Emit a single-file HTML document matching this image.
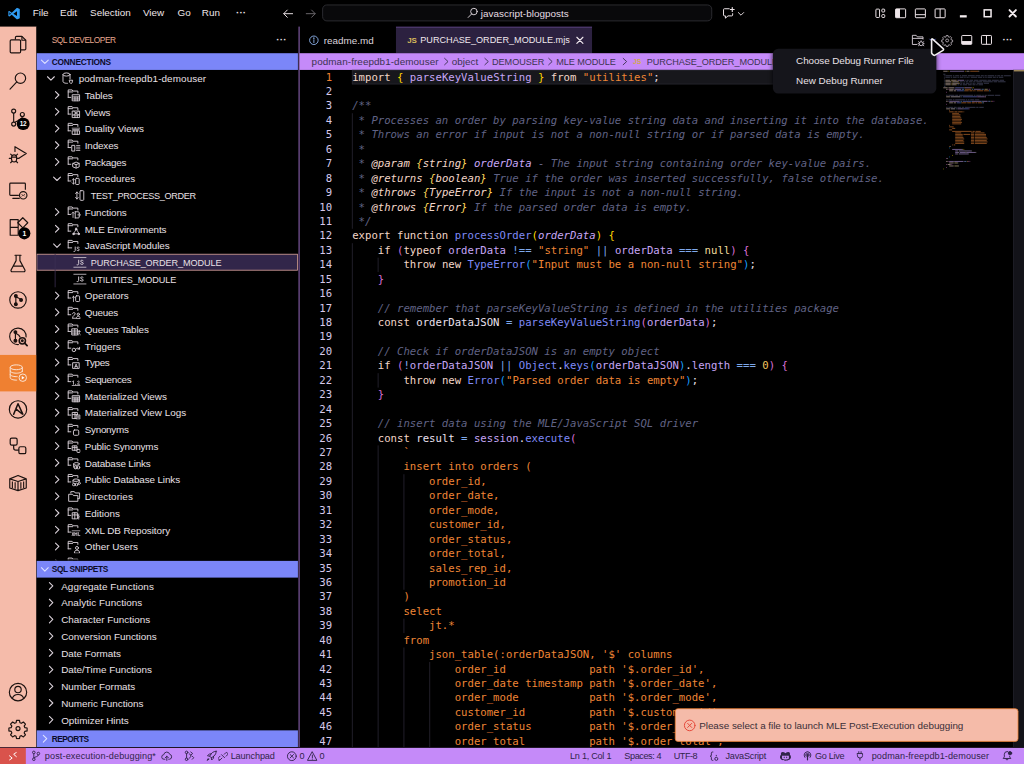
<!DOCTYPE html>
<html lang="en"><head><meta charset="utf-8"><title>PURCHASE_ORDER_MODULE.mjs - javascript-blogposts</title>
<style>
*{box-sizing:border-box;margin:0;padding:0}
html,body{width:1024px;height:764px;overflow:hidden;background:#000}
body{font-family:"Liberation Sans",sans-serif;font-size:13px;color:#e9dfe6}
#app{position:absolute;left:0;top:0;width:1352px;height:1010px;transform:scale(.76);transform-origin:0 0;background:#000;overflow:hidden}
.abs{position:absolute}
svg{display:block}
/* title bar */
#title{position:absolute;left:0;top:0;width:100%;height:35px;background:#000}
#title .menu{position:absolute;top:-.6px;height:35px;line-height:35px;font-size:13px;color:#efe6ea;white-space:nowrap}
#cmd{position:absolute;left:423.5px;top:5.5px;width:513.5px;height:22.5px;border:1px solid #36363c;border-radius:6px;background:#09090b}
#cmd span{position:absolute;left:208px;top:0;line-height:21px;font-size:13px;letter-spacing:.05px;color:#e6dde2;white-space:nowrap}
/* activity bar */
#act{position:absolute;left:0;top:35px;width:48.3px;height:948.27px;background:#f5bbaa}
#act .it{position:absolute;left:0;width:48.3px;height:48px}
#act .it svg{position:absolute;left:10.4px;top:10.2px;width:27.4px;height:27.4px}
#act .on{background:#ef8031}
.badge{position:absolute;left:24px;top:24px;min-width:16px;height:16px;border-radius:8px;background:#000;color:#fff;font-size:9px;font-weight:bold;line-height:16px;text-align:center;padding:0 3px}
/* sidebar */
#side{position:absolute;z-index:2;left:48px;top:35px;width:345.6px;height:948.27px;background:#000;border-right:1.4px solid #c58af9;overflow:hidden}
#side .ttl{position:absolute;left:20px;top:0;line-height:35.4px;font-size:11px;letter-spacing:-.59px;color:#e8a68f}
.ph{position:absolute;left:0;width:344px;height:22px;background:#7b86f8;color:#0c0c2a;font-weight:bold;font-size:11px;line-height:23px;padding-left:20px;white-space:nowrap}
.ph svg{position:absolute;left:3px;top:3px;width:16px;height:16px}
.row{position:absolute;left:0;width:344px;height:22px;line-height:22px;font-size:13px;color:#e9e1e6;white-space:nowrap}
.row .tw{position:absolute;top:3px;width:16px;height:16px}
.row .ic{position:absolute;top:3px;width:16px;height:16px}
.row .lb{position:absolute;top:1.2px}
.row.sel{background:#32264a;outline:1.2px solid #dba392;outline-offset:-1.2px}
/* editor */
#ed{position:absolute;left:392px;top:35px;width:960px;height:948.27px;background:#000;overflow:hidden}
#tabs{position:absolute;left:0;top:0;width:100%;height:35px;background:#000}
.tab{position:absolute;top:0;height:35px;line-height:35px;font-size:13px;white-space:nowrap;color:#e9e1e6}
#bc{position:absolute;left:0;top:35px;width:100%;height:22px;background:#c58af9;color:#3b3350;font-size:13px;line-height:22px;white-space:nowrap}
#bc span{position:absolute;top:.5px}
#code{position:absolute;left:0;top:57px;width:100%;height:891.27px;font-family:"DejaVu Sans Mono","Liberation Mono",monospace;font-size:14px;line-height:19px}
.ln{position:absolute;left:0;width:45px;text-align:right;height:19px;color:#d6c9ea}
.cl{position:absolute;left:71.4px;height:19px;white-space:pre;color:#ece2ea}
.ln.a{color:#ef8031}
.cl i{font-style:normal}
.k{color:#f3d6c8}.f{color:#7f8af7}.v{color:#c6a6f6}.d{color:#ebe0ee}.s{color:#ef8636}.o{color:#7ea9ec}.l{color:#f3dc9c}.n{color:#efc25c}.p{color:#ece2ea}
.b1{color:#ffd700}.b2{color:#da70d6}.b3{color:#179fff}
.cl i.c{color:#606385;font-style:italic}.cl i.t{color:#f3d6c8;font-style:italic}.cl i.tb{color:#ffd75a;font-style:italic}.cl i.tv{color:#c6a6f6;font-style:italic}
.row.u .lb,.u2{font-size:12px}
.u3{font-size:12px;letter-spacing:-.1px}
/* status */
#status{position:absolute;left:0;top:983.9px;width:100%;height:27px;background:#c58af9;color:#30244a;font-size:12px;line-height:22px;white-space:nowrap}
#status span{position:absolute;top:0}
</style></head>
<body>
<div id="app">
<div id="title">
<svg class="abs" style="left:9.5px;top:9.5px;width:17px;height:16px" viewBox="0 0 100 100"><path d="M74 2 31 42 12 27 3 31v38l9 4 19-15 43 40 23-10V12zM12 61V39l12 11zm62 9L44 50l30-20z" fill="#2f9bf2"/></svg>
<span class="menu" style="left:43px">File</span>
<span class="menu" style="left:79px">Edit</span>
<span class="menu" style="left:118.5px">Selection</span>
<span class="menu" style="left:188px">View</span>
<span class="menu" style="left:233.5px">Go</span>
<span class="menu" style="left:265.5px">Run</span>
<span class="menu" style="left:310.500px;letter-spacing:.200px;font-weight:bold">···</span>
<svg class="abs" style="left:371px;top:9.5px;width:16px;height:16px" viewBox="0 0 16 16" fill="none" stroke="#efe6ea" stroke-width="1.25" stroke-linecap="round" stroke-linejoin="round"><path d="M14 8H2.5M7 3.2 2.3 8 7 12.8"/></svg>
<svg class="abs" style="left:401px;top:9.5px;width:16px;height:16px" viewBox="0 0 16 16" fill="none" stroke="#6e6a70" stroke-width="1.25" stroke-linecap="round" stroke-linejoin="round"><path d="M2 8h11.5M9 3.2 13.7 8 9 12.8"/></svg>
<div id="cmd"><svg class="abs" style="left:189px;top:2.5px;width:16px;height:16px" viewBox="0 0 16 16" fill="none" stroke="#e6dde2" stroke-width="1.2" stroke-linecap="round"><circle cx="9.6" cy="6.2" r="4.3"/><path d="M6.5 9.4 2 14"/></svg><span>javascript-blogposts</span></div>
<svg class="abs" style="left:950px;top:9px;width:18px;height:17px" viewBox="0 0 18 17" fill="none" stroke="#efe6ea" stroke-width="1.3" stroke-linejoin="round" stroke-linecap="round"><path d="M9.5 2.5H3.2a1.2 1.2 0 0 0-1.2 1.2v7a1.2 1.2 0 0 0 1.2 1.2H4.5v3l3.4-3h4.9a1.2 1.2 0 0 0 1.2-1.2V9"/><path d="M13.5 1v5M11 3.5h5" stroke-width="1.5"/></svg>
<svg class="abs" style="left:969px;top:12px;width:12px;height:12px" viewBox="0 0 12 12" fill="none" stroke="#efe6ea" stroke-width="1.2" stroke-linecap="round" stroke-linejoin="round"><path d="M2.5 4.5 6 8l3.500-3.500"/></svg>
<!-- layout controls -->
<svg class="abs" style="left:1150px;top:9px;width:17px;height:17px" viewBox="0 0 17 17" fill="none" stroke="#efe6ea" stroke-width="1.3"><rect x="2.500" y="3" width="4.800" height="11" rx="1"/><rect x="10.300" y="3" width="3.800" height="3.800" rx="1"/><rect x="10.300" y="10.200" width="3.800" height="3.800" rx="1"/></svg>
<svg class="abs" style="left:1175.500px;top:9px;width:18px;height:17px" viewBox="0 0 18 17"><rect x="2.400" y="2.700" width="13.200" height="11.600" rx="1" fill="none" stroke="#efe6ea" stroke-width="1.300"/><rect x="2.400" y="2.700" width="5.800" height="11.600" fill="#efe6ea"/></svg>
<svg class="abs" style="left:1201.500px;top:9px;width:18px;height:17px" viewBox="0 0 18 17" fill="none" stroke="#efe6ea" stroke-width="1.3"><rect x="2.400" y="2.700" width="13.200" height="11.600" rx="1"/><path d="M2.400 10.300h13.200"/></svg>
<svg class="abs" style="left:1227.500px;top:9px;width:18px;height:17px" viewBox="0 0 18 17" fill="none" stroke="#efe6ea" stroke-width="1.3"><rect x="2.400" y="2.700" width="13.200" height="11.600" rx="1"/><path d="M9 2.700v11.600"/></svg>
<!-- window controls -->
<div class="abs" style="left:1262.500px;top:19.800px;width:9.800px;height:2.800px;background:#f3ecef"></div>
<div class="abs" style="left:1294.300px;top:11.800px;width:11px;height:11px;border:2.600px solid #f3ecef"></div>
<svg class="abs" style="left:1324.500px;top:10px;width:15px;height:15px" viewBox="0 0 15 15" stroke="#f3ecef" stroke-width="2.500" stroke-linecap="round"><path d="M3.300 3.300l8.400 8.400M11.700 3.300l-8.400 8.400"/></svg>
</div>

<div id="act">
<div class="it" style="top:0"><svg viewBox="0 0 24 24" fill="none" stroke="#1c1210" stroke-width="1.35" stroke-linejoin="round"><path d="M9 6V3.800c0-.700.500-1.300 1.200-1.300h6.300l4.500 4.500v9.700c0 .700-.500 1.300-1.200 1.300H15"/><path d="M16.500 2.500V7H21"/><rect x="3" y="6.500" width="12" height="15" rx="1.300"/></svg></div>
<div class="it" style="top:48px"><svg viewBox="0 0 24 24" fill="none" stroke="#1c1210" stroke-width="1.35" stroke-linecap="round"><circle cx="14.800" cy="8.700" r="6"/><path d="M10.600 13 2.800 21.200"/></svg></div>
<div class="it" style="top:96px"><svg viewBox="0 0 24 24" fill="none" stroke="#1c1210" stroke-width="1.35"><circle cx="7" cy="4.500" r="2.300"/><circle cx="7" cy="19.500" r="2.300"/><circle cx="17" cy="8.500" r="2.300"/><path d="M7 6.800v10.400M17 10.800c0 4-6 4.500-9 7"/></svg><div class="badge" style="left:22px;top:23.700px;font-size:8.500px;width:16.800px;height:16.800px;line-height:16.800px;border-radius:9px;padding:0;letter-spacing:-.300px">12</div></div>
<div class="it" style="top:144px"><svg viewBox="0 0 24 24" fill="none" stroke="#1c1210" stroke-width="1.35" stroke-linejoin="round" stroke-linecap="round"><path d="M8.500 9V3.500L21.500 11.500 13.500 16.500"/><ellipse cx="7.500" cy="17" rx="3" ry="4"/><path d="M5 13.500 3.500 12M10 13.500l1.500-1.500M4.500 17H2M10.500 17H13M5 20.500 3.500 22M10 20.500l1.500 1.500M5 15.500h5"/></svg></div>
<div class="it" style="top:192px"><svg viewBox="0 0 24 24" fill="none" stroke="#1c1210" stroke-width="1.35" stroke-linejoin="round"><path d="M13 17.500H3.500c-.600 0-1-.400-1-1v-12c0-.600.400-1 1-1h16c.600 0 1 .400 1 1V11"/><path d="M6 21h7.500" stroke-linecap="round"/><circle cx="18" cy="17.500" r="4.300"/><path d="M16.300 18.800l1.200-1.300-1.200-1.200M19.700 16.200l-1.200 1.300 1.200 1.200" stroke-width="1"/></svg></div>
<div class="it" style="top:240px"><svg viewBox="0 0 24 24" fill="none" stroke="#1c1210" stroke-width="1.35" stroke-linejoin="round"><path d="M3 3.500h9.200v18H3zM3 12.500h9"/><path d="M17.500 1.300 23.300 7.100 17.500 12.900 11.700 7.100z"/></svg><div class="badge" style="left:24px;top:23.700px;width:16px;height:16px;line-height:16px;border-radius:9px;padding:0;font-size:9px">1</div></div>
<div class="it" style="top:288px"><svg viewBox="0 0 24 24" fill="none" stroke="#1c1210" stroke-width="1.35" stroke-linejoin="round" stroke-linecap="round"><path d="M8.500 2.500h7M9.800 2.500v6.200L4 19.500c-.400.900.200 2 1.200 2h13.600c1 0 1.600-1.100 1.200-2L14.200 8.700V2.500M7 15h10"/></svg></div>
<div class="it" style="top:336px"><svg viewBox="0 0 24 24" fill="none" stroke="#1c1210" stroke-width="1.35"><circle cx="12" cy="12" r="9.500"/><circle cx="9.500" cy="7.500" r="1.600" fill="#1c1210"/><circle cx="9.500" cy="17" r="1.600" fill="#1c1210"/><circle cx="15.500" cy="12" r="1.600" fill="#1c1210"/><path d="M9.500 7.500V17M9.500 8.500c3 1 5.500 2 6 3.500"/></svg></div>
<div class="it" style="top:384px"><svg viewBox="0 0 24 24" fill="none" stroke="#1c1210" stroke-width="1.35"><path d="M13 21.300A9.500 9.500 0 1 1 21.300 13"/><circle cx="9" cy="7" r="1.600" fill="#1c1210"/><circle cx="9" cy="17" r="1.600" fill="#1c1210"/><path d="M9 7v10M9 8c3 1.500 5 3 5.500 5"/><circle cx="17" cy="17" r="3.600" stroke-width="1.800"/><circle cx="17" cy="17" r="1" fill="#1c1210"/><path d="M19.700 19.700 22.500 22.500" stroke-width="2" stroke-linecap="round"/></svg></div>
<div class="it on" style="top:432px"><svg viewBox="0 0 24 24" fill="none" stroke="#fbe6d8" stroke-width="1.1"><ellipse cx="10" cy="5.500" rx="7" ry="2.800"/><path d="M3 5.500v12c0 1.500 3 2.800 7 2.800h1M17 5.500V11M3 9.500c0 1.500 3 2.800 7 2.800s7-1.300 7-2.800M3 13.500c0 1.500 3 2.800 7 2.800h1.500"/><circle cx="17.500" cy="17.500" r="4.300"/><path d="M16.300 15.500v4l3.200-2z" fill="#fff" stroke="none"/></svg></div>
<div class="it" style="top:480px"><svg viewBox="0 0 24 24" fill="none" stroke="#1c1210" stroke-width="1.35"><circle cx="12" cy="12" r="10"/><path d="M7 17.500 12 5.500l5.500 12M9.500 11.500l7 5.500" stroke-width="1.800" stroke-linejoin="round" stroke-linecap="round"/></svg></div>
<div class="it" style="top:528px"><svg viewBox="0 0 24 24" fill="none" stroke="#1c1210" stroke-width="1.4" stroke-linejoin="round"><rect x="3" y="3" width="8" height="8" rx="1.800"/><rect x="13" y="13" width="8" height="8" rx="1.800"/><path d="M7 11v3.500c0 1.400 1.100 2.500 2.500 2.500H13"/></svg></div>
<div class="it" style="top:576px"><svg viewBox="0 0 24 24" fill="none" stroke="#1c1210" stroke-width="1.35" stroke-linejoin="round"><path d="M2.500 8 12 4l9.500 4v10.500L12 21.500 2.500 18.500zM2.500 8 12 11l9.500-3M12 11v10.500"/><path d="M5.500 11v7.500M8.700 12v7.500M15.300 12v7.500M18.500 11v7.500" stroke-width="1.300"/></svg></div>
<div class="it" style="top:852.270px"><svg viewBox="0 0 24 24" fill="none" stroke="#1c1210" stroke-width="1.35"><circle cx="12" cy="12" r="10"/><circle cx="12" cy="9" r="3.700"/><path d="M5.500 19.300c.800-3 3.300-4.600 6.500-4.600s5.700 1.600 6.500 4.600"/></svg></div>
<div class="it" style="top:900.270px"><svg viewBox="0 0 24 24" fill="none" stroke="#1c1210" stroke-width="1.35" stroke-linejoin="round"><circle cx="12" cy="12" r="2.300"/><path d="M10.300 2.500h3.400l.5 2.700 1.700.7 2.300-1.500 2.400 2.400-1.500 2.300.7 1.700 2.700.5v3.400l-2.700.5-.7 1.700 1.500 2.300-2.400 2.400-2.300-1.500-1.700.7-.5 2.700h-3.400l-.5-2.700-1.700-.7-2.300 1.500-2.400-2.400 1.500-2.300-.7-1.700-2.700-.5v-3.400l2.700-.5.7-1.700-1.500-2.300 2.400-2.400 2.300 1.500 1.700-.7z"/></svg></div>
</div>

<div id="side">
<div class="ttl">SQL DEVELOPER</div>
<div class="abs" style="left:315.500px;top:0;line-height:33px;font-size:13px;font-weight:bold;letter-spacing:.200px;color:#e9e1e6">···</div>
<div class="ph" style="top:35px"><svg class="tw" style="left:3px" viewBox="0 0 16 16" fill="none" stroke="#dfe2ff" stroke-width="1.450" stroke-linecap="round" stroke-linejoin="round"><path d="M3.5 6 8 10.500 12.500 6"/></svg><span class="pt" style="letter-spacing:-.300px">CONNECTIONS</span></div>
<div class="row " style="top:57px"><svg class="tw" style="left:11px" viewBox="0 0 16 16" fill="none" stroke="#d9d0d8" stroke-width="1.450" stroke-linecap="round" stroke-linejoin="round"><path d="M3.5 6 8 10.500 12.500 6"/></svg><svg class="ic" style="left:31.5px;top:1.500px;width:18.500px;height:18.500px" viewBox="0 0 16 16" fill="none" stroke="#d9d0d8" stroke-width="1.050" stroke-linejoin="round" stroke-linecap="round"><path d="M2.500 3.500v8c0 1 1.800 2 4 2h1M10.500 3.500v5"/><ellipse cx="6.500" cy="3.500" rx="4" ry="1.800"/><path d="M10 10h3.500l-.8 3-1 1-1-1z" /></svg><span class="lb" style="left:55.5px;letter-spacing:0.13px">podman-freepdb1-demouser</span></div>
<div class="row " style="top:79px"><svg class="tw" style="left:19px" viewBox="0 0 16 16" fill="none" stroke="#d9d0d8" stroke-width="1.450" stroke-linecap="round" stroke-linejoin="round"><path d="M6 3.500 10.500 8 6 12.500"/></svg><svg class="ic" style="left:39.5px;top:1.500px;width:18.500px;height:18.500px" viewBox="0 0 16 16" fill="none" stroke="#d9d0d8" stroke-width="1.050" stroke-linejoin="round" stroke-linecap="round"><path d="M1.500 10.500V2h4.500l.8 1.300h5.700V5.500M1.500 4.300h5M1.500 10.500h3"/><rect x="6.500" y="7.500" width="8" height="7"/><path d="M6.500 10h8M6.500 12.300h8M9.200 10v4.500M11.800 10v4.500"/></svg><span class="lb" style="left:63.5px;letter-spacing:-0.15px">Tables</span></div>
<div class="row " style="top:101px"><svg class="tw" style="left:19px" viewBox="0 0 16 16" fill="none" stroke="#d9d0d8" stroke-width="1.450" stroke-linecap="round" stroke-linejoin="round"><path d="M6 3.500 10.500 8 6 12.500"/></svg><svg class="ic" style="left:39.5px;top:1.500px;width:18.500px;height:18.500px" viewBox="0 0 16 16" fill="none" stroke="#d9d0d8" stroke-width="1.050" stroke-linejoin="round" stroke-linecap="round"><path d="M1.500 10.500V2h4.500l.8 1.300h5.700V5.500M1.500 4.300h5M1.500 10.500h3"/><rect x="6.500" y="7" width="8" height="7.500"/><path d="M6.500 11.500h8M8 7.500l5 3.500M13 7.500 8 11M9.200 11.500v3M11.800 11.500v3"/></svg><span class="lb" style="left:63.5px;letter-spacing:-0.15px">Views</span></div>
<div class="row " style="top:123px"><svg class="tw" style="left:19px" viewBox="0 0 16 16" fill="none" stroke="#d9d0d8" stroke-width="1.450" stroke-linecap="round" stroke-linejoin="round"><path d="M6 3.500 10.500 8 6 12.500"/></svg><svg class="ic" style="left:39.5px;top:1.500px;width:18.500px;height:18.500px" viewBox="0 0 16 16" fill="none" stroke="#d9d0d8" stroke-width="1.050" stroke-linejoin="round" stroke-linecap="round"><path d="M1.500 10.500V2h4.500l.8 1.300h5.700V5.500M1.500 4.300h5M1.500 10.500h3"/><path d="M6 7.500h8.500M6.500 9h7.500" stroke-width=".8"/><rect x="6.500" y="10.500" width="8" height="4"/><path d="M9.200 10.500v4M11.800 10.500v4"/></svg><span class="lb" style="left:63.5px">Duality Views</span></div>
<div class="row " style="top:145px"><svg class="tw" style="left:19px" viewBox="0 0 16 16" fill="none" stroke="#d9d0d8" stroke-width="1.450" stroke-linecap="round" stroke-linejoin="round"><path d="M6 3.500 10.500 8 6 12.500"/></svg><svg class="ic" style="left:39.5px;top:1.500px;width:18.500px;height:18.500px" viewBox="0 0 16 16" fill="none" stroke="#d9d0d8" stroke-width="1.050" stroke-linejoin="round" stroke-linecap="round"><path d="M1.500 10.500V2h4.500l.8 1.300h5.700V5.500M1.500 4.300h5M1.500 10.500h3"/><rect x="6" y="8" width="3" height="6.500"/><path d="M11 8.500h4M11 11h4M11 13.500h4" stroke-width="1.200"/></svg><span class="lb" style="left:63.5px;letter-spacing:-0.2px">Indexes</span></div>
<div class="row " style="top:167px"><svg class="tw" style="left:19px" viewBox="0 0 16 16" fill="none" stroke="#d9d0d8" stroke-width="1.450" stroke-linecap="round" stroke-linejoin="round"><path d="M6 3.500 10.500 8 6 12.500"/></svg><svg class="ic" style="left:39.5px;top:1.500px;width:18.500px;height:18.500px" viewBox="0 0 16 16" fill="none" stroke="#d9d0d8" stroke-width="1.050" stroke-linejoin="round" stroke-linecap="round"><path d="M1.500 10.500V2h4.500l.8 1.300h5.700V5.500M1.500 4.300h5M1.500 10.500h3"/><path d="M7 9.500 10.500 8l3.500 1.500V13.500L10.500 15 7 13.500zM7 9.500l3.500 1.500 3.500-1.500M10.500 11v4"/></svg><span class="lb" style="left:63.5px;letter-spacing:-0.3px">Packages</span></div>
<div class="row " style="top:189px"><svg class="tw" style="left:19px" viewBox="0 0 16 16" fill="none" stroke="#d9d0d8" stroke-width="1.450" stroke-linecap="round" stroke-linejoin="round"><path d="M3.5 6 8 10.500 12.500 6"/></svg><svg class="ic" style="left:39.5px;top:1.500px;width:18.500px;height:18.500px" viewBox="0 0 16 16" fill="none" stroke="#d9d0d8" stroke-width="1.050" stroke-linejoin="round" stroke-linecap="round"><path d="M1.500 10.500V2h4.500l.8 1.300h5.700V5.500M1.500 4.300h5M1.500 10.500h3"/><rect x="10" y="7.500" width="4" height="7" rx=".8"/><path d="M7.500 8v6M6 9.500 7.500 8 9 9.500M6 12.500 7.500 14 9 12.500" stroke-width=".9"/></svg><span class="lb" style="left:63.5px">Procedures</span></div>
<div class="row u" style="top:211px"><svg class="ic" style="left:47.5px;top:1.500px;width:18.500px;height:18.500px" viewBox="0 0 16 16" fill="none" stroke="#d9d0d8" stroke-width="1.050" stroke-linejoin="round" stroke-linecap="round"><rect x="8" y="2.500" width="4.300" height="11" rx="1"/><path d="M4.500 4v8M3 5.800 4.500 4 6 5.800M3 10.200 4.500 12 6 10.200" stroke-width="1"/></svg><span class="lb" style="left:71.5px;letter-spacing:-0.44px">TEST_PROCESS_ORDER</span></div>
<div class="row " style="top:233px"><svg class="tw" style="left:19px" viewBox="0 0 16 16" fill="none" stroke="#d9d0d8" stroke-width="1.450" stroke-linecap="round" stroke-linejoin="round"><path d="M6 3.500 10.500 8 6 12.500"/></svg><svg class="ic" style="left:39.5px;top:1.500px;width:18.500px;height:18.500px" viewBox="0 0 16 16" fill="none" stroke="#d9d0d8" stroke-width="1.050" stroke-linejoin="round" stroke-linecap="round"><path d="M1.500 10.500V2h4.500l.8 1.300h5.700V5.500M1.500 4.300h5M1.500 10.500h3"/><path d="M9.500 7.500h3.500a1 1 0 0 1 1 1V10M9.500 14.500h3.500a1 1 0 0 0 1-1V12M9.500 7.500v7M12.500 11H15.500M14.300 9.800 15.500 11l-1.200 1.200"/><path d="M7 8v6M5.800 9.300 7 8l1.200 1.300" stroke-width=".9"/></svg><span class="lb" style="left:63.5px;letter-spacing:-0.13px">Functions</span></div>
<div class="row " style="top:255px"><svg class="tw" style="left:19px" viewBox="0 0 16 16" fill="none" stroke="#d9d0d8" stroke-width="1.450" stroke-linecap="round" stroke-linejoin="round"><path d="M6 3.500 10.500 8 6 12.500"/></svg><svg class="ic" style="left:39.5px;top:1.500px;width:18.500px;height:18.500px" viewBox="0 0 16 16" fill="none" stroke="#d9d0d8" stroke-width="1.050" stroke-linejoin="round" stroke-linecap="round"><path d="M1.500 10.500V2h4.500l.8 1.300h5.700V5.500M1.500 4.300h5M1.500 10.500h3"/><path d="M10.500 8.500 7.500 13.500h6zM10.500 8.500V6.800" stroke-width=".9"/><circle cx="10.500" cy="8.300" r=".9" fill="#d9d0d8"/><circle cx="7.500" cy="13.700" r=".9" fill="#d9d0d8"/><circle cx="13.500" cy="13.700" r=".9" fill="#d9d0d8"/></svg><span class="lb" style="left:63.5px;letter-spacing:-0.15px">MLE Environments</span></div>
<div class="row " style="top:277px"><svg class="tw" style="left:19px" viewBox="0 0 16 16" fill="none" stroke="#d9d0d8" stroke-width="1.450" stroke-linecap="round" stroke-linejoin="round"><path d="M3.5 6 8 10.500 12.500 6"/></svg><svg class="ic" style="left:39.5px;top:1.500px;width:18.500px;height:18.500px" viewBox="0 0 16 16" fill="none" stroke="#d9d0d8" stroke-width="1.050" stroke-linejoin="round" stroke-linecap="round"><path d="M1.500 10.500V2h4.500l.8 1.300h5.700V5.500M1.500 4.300h5M1.500 10.500h4"/><path d="M9.500 9.500v4c0 1-.500 1.300-1.500 1.300M14 10c-.800-.600-2.500-.600-2.500.500 0 1.300 2.600.800 2.600 2.300 0 1.200-2 1.200-2.800.400" stroke-width="1"/></svg><span class="lb" style="left:63.5px;letter-spacing:-0.1px">JavaScript Modules</span></div>
<div class="row u sel" style="top:299px"><svg class="ic" style="left:47.5px;top:1.500px;width:18.500px;height:18.500px" viewBox="0 0 16 16" fill="none" stroke="#d9d0d8" stroke-width="1.050" stroke-linejoin="round" stroke-linecap="round"><path d="M1 2.500h14M1 13.500h14" stroke-width=".9"/><path d="M6.500 5.500v4c0 1.200-.700 1.500-1.800 1.300M11.500 6c-.800-.700-2.800-.700-2.800.600 0 1.500 3 .900 3 2.600 0 1.400-2.300 1.300-3.200.400" stroke-width="1.100"/></svg><span class="lb" style="left:71.5px;letter-spacing:-0.14px">PURCHASE_ORDER_MODULE</span></div>
<div class="row u" style="top:321px"><svg class="ic" style="left:47.5px;top:1.500px;width:18.500px;height:18.500px" viewBox="0 0 16 16" fill="none" stroke="#d9d0d8" stroke-width="1.050" stroke-linejoin="round" stroke-linecap="round"><path d="M1 2.500h14M1 13.500h14" stroke-width=".9"/><path d="M6.500 5.500v4c0 1.200-.700 1.500-1.800 1.300M11.500 6c-.800-.700-2.800-.700-2.800.600 0 1.500 3 .900 3 2.600 0 1.400-2.300 1.300-3.200.400" stroke-width="1.100"/></svg><span class="lb" style="left:71.5px;letter-spacing:-0.1px">UTILITIES_MODULE</span></div>
<div class="row " style="top:343px"><svg class="tw" style="left:19px" viewBox="0 0 16 16" fill="none" stroke="#d9d0d8" stroke-width="1.450" stroke-linecap="round" stroke-linejoin="round"><path d="M6 3.500 10.500 8 6 12.500"/></svg><svg class="ic" style="left:39.5px;top:1.500px;width:18.500px;height:18.500px" viewBox="0 0 16 16" fill="none" stroke="#d9d0d8" stroke-width="1.050" stroke-linejoin="round" stroke-linecap="round"><path d="M1.500 10.500V2h4.500l.8 1.300h5.700V5.500M1.500 4.300h5M1.500 10.500h3"/><rect x="10" y="8" width="4.500" height="6.500" rx="1"/><path d="M7.500 8.500v6M6 10l1.500-1.500L9 10" stroke-width=".9"/></svg><span class="lb" style="left:63.5px">Operators</span></div>
<div class="row " style="top:365px"><svg class="tw" style="left:19px" viewBox="0 0 16 16" fill="none" stroke="#d9d0d8" stroke-width="1.450" stroke-linecap="round" stroke-linejoin="round"><path d="M6 3.500 10.500 8 6 12.500"/></svg><svg class="ic" style="left:39.5px;top:1.500px;width:18.500px;height:18.500px" viewBox="0 0 16 16" fill="none" stroke="#d9d0d8" stroke-width="1.050" stroke-linejoin="round" stroke-linecap="round"><path d="M1.500 10.500V2h4.500l.8 1.300h5.700V5.500M1.500 4.300h5M1.500 10.500h3"/><path d="M6.500 14c0-3 3-3 3-4.500 0-1-.700-1.500-1.500-1.500s-1.500.500-1.500 1.300M6.500 14.500h3.500" stroke-width="1"/><circle cx="13" cy="10" r="1.300"/><path d="M10.800 14.500c0-1.500 1-2.300 2.200-2.300s2.200.800 2.200 2.300z"/></svg><span class="lb" style="left:63.5px;letter-spacing:-0.3px">Queues</span></div>
<div class="row " style="top:387px"><svg class="tw" style="left:19px" viewBox="0 0 16 16" fill="none" stroke="#d9d0d8" stroke-width="1.450" stroke-linecap="round" stroke-linejoin="round"><path d="M6 3.500 10.500 8 6 12.500"/></svg><svg class="ic" style="left:39.5px;top:1.500px;width:18.500px;height:18.500px" viewBox="0 0 16 16" fill="none" stroke="#d9d0d8" stroke-width="1.050" stroke-linejoin="round" stroke-linecap="round"><path d="M1.500 10.500V2h4.500l.8 1.300h5.700V5.500M1.500 4.300h5M1.500 10.500h3"/><rect x="6" y="7.500" width="6" height="7"/><path d="M6 10h6M6 12.300h6M9 7.500v7"/><circle cx="14" cy="10.500" r="1"/><path d="M12.700 14.500c0-1.200.600-1.800 1.300-1.800s1.300.600 1.300 1.800"/></svg><span class="lb" style="left:63.5px;letter-spacing:-0.18px">Queues Tables</span></div>
<div class="row " style="top:409px"><svg class="tw" style="left:19px" viewBox="0 0 16 16" fill="none" stroke="#d9d0d8" stroke-width="1.450" stroke-linecap="round" stroke-linejoin="round"><path d="M6 3.500 10.500 8 6 12.500"/></svg><svg class="ic" style="left:39.5px;top:1.500px;width:18.500px;height:18.500px" viewBox="0 0 16 16" fill="none" stroke="#d9d0d8" stroke-width="1.050" stroke-linejoin="round" stroke-linecap="round"><path d="M1.500 10.500V2h4.500l.8 1.300h5.700V5.500M1.500 4.300h5M1.500 10.500h3"/><circle cx="8" cy="12.500" r="2"/><path d="M10 11.500c1.500-1.500 3-1.500 4.500 0M14.500 9.500v2h-2"/></svg><span class="lb" style="left:63.5px">Triggers</span></div>
<div class="row " style="top:431px"><svg class="tw" style="left:19px" viewBox="0 0 16 16" fill="none" stroke="#d9d0d8" stroke-width="1.450" stroke-linecap="round" stroke-linejoin="round"><path d="M6 3.500 10.500 8 6 12.500"/></svg><svg class="ic" style="left:39.5px;top:1.500px;width:18.500px;height:18.500px" viewBox="0 0 16 16" fill="none" stroke="#d9d0d8" stroke-width="1.050" stroke-linejoin="round" stroke-linecap="round"><path d="M1.500 10.500V2h4.500l.8 1.300h5.700V5.500M1.500 4.300h5M1.500 10.500h3"/><rect x="7" y="8" width="7" height="6.500"/><path d="M9 13.500l1.500-4 1.500 4M9.500 12.300h2" stroke-width=".9"/></svg><span class="lb" style="left:63.5px;letter-spacing:-0.45px">Types</span></div>
<div class="row " style="top:453px"><svg class="tw" style="left:19px" viewBox="0 0 16 16" fill="none" stroke="#d9d0d8" stroke-width="1.450" stroke-linecap="round" stroke-linejoin="round"><path d="M6 3.500 10.500 8 6 12.500"/></svg><svg class="ic" style="left:39.5px;top:1.500px;width:18.500px;height:18.500px" viewBox="0 0 16 16" fill="none" stroke="#d9d0d8" stroke-width="1.050" stroke-linejoin="round" stroke-linecap="round"><path d="M1.500 10.500V2h4.500l.8 1.300h5.700V5.500M1.500 4.300h5M1.500 10.500h3"/><path d="M6.500 10.500l1-1v4M10 13.500v.5M12 10.500c.500-1 2.500-.800 2 .500l-2 2.500h2.500M6 15h9" stroke-width=".9"/></svg><span class="lb" style="left:63.5px;letter-spacing:-0.42px">Sequences</span></div>
<div class="row " style="top:475px"><svg class="tw" style="left:19px" viewBox="0 0 16 16" fill="none" stroke="#d9d0d8" stroke-width="1.450" stroke-linecap="round" stroke-linejoin="round"><path d="M6 3.500 10.500 8 6 12.500"/></svg><svg class="ic" style="left:39.5px;top:1.500px;width:18.500px;height:18.500px" viewBox="0 0 16 16" fill="none" stroke="#d9d0d8" stroke-width="1.050" stroke-linejoin="round" stroke-linecap="round"><path d="M1.500 10.500V2h4.500l.8 1.300h5.700V5.500M1.500 4.300h5M1.500 10.500h3"/><rect x="6.500" y="7.500" width="8" height="7" fill="#d9d0d8" fill-opacity=".25"/><path d="M6.500 10h8M6.500 12.300h8M9.200 10v4.500M11.800 10v4.500"/></svg><span class="lb" style="left:63.5px">Materialized Views</span></div>
<div class="row " style="top:497px"><svg class="tw" style="left:19px" viewBox="0 0 16 16" fill="none" stroke="#d9d0d8" stroke-width="1.450" stroke-linecap="round" stroke-linejoin="round"><path d="M6 3.500 10.500 8 6 12.500"/></svg><svg class="ic" style="left:39.5px;top:1.500px;width:18.500px;height:18.500px" viewBox="0 0 16 16" fill="none" stroke="#d9d0d8" stroke-width="1.050" stroke-linejoin="round" stroke-linecap="round"><path d="M1.500 10.500V2h4.500l.8 1.300h5.700V5.500M1.500 4.300h5M1.500 10.500h3"/><rect x="6.500" y="7.500" width="5.500" height="7"/><path d="M6.500 10h5.500M9.200 7.500v7"/><rect x="11" y="10.500" width="4" height="4.500" fill="#000"/><path d="M12 12h2M12 13.500h2" stroke-width=".8"/></svg><span class="lb" style="left:63.5px">Materialized View Logs</span></div>
<div class="row " style="top:519px"><svg class="tw" style="left:19px" viewBox="0 0 16 16" fill="none" stroke="#d9d0d8" stroke-width="1.450" stroke-linecap="round" stroke-linejoin="round"><path d="M6 3.500 10.500 8 6 12.500"/></svg><svg class="ic" style="left:39.5px;top:1.500px;width:18.500px;height:18.500px" viewBox="0 0 16 16" fill="none" stroke="#d9d0d8" stroke-width="1.050" stroke-linejoin="round" stroke-linecap="round"><path d="M1.500 10.500V2h4.500l.8 1.300h5.700V5.500M1.500 4.300h5M1.500 10.500h3"/><rect x="7.500" y="8.500" width="6" height="6" rx="1.200"/></svg><span class="lb" style="left:63.5px;letter-spacing:-0.38px">Synonyms</span></div>
<div class="row " style="top:541px"><svg class="tw" style="left:19px" viewBox="0 0 16 16" fill="none" stroke="#d9d0d8" stroke-width="1.450" stroke-linecap="round" stroke-linejoin="round"><path d="M6 3.500 10.500 8 6 12.500"/></svg><svg class="ic" style="left:39.5px;top:1.500px;width:18.500px;height:18.500px" viewBox="0 0 16 16" fill="none" stroke="#d9d0d8" stroke-width="1.050" stroke-linejoin="round" stroke-linecap="round"><path d="M1.500 10.500V2h4.500l.8 1.300h5.700V5.500M1.500 4.300h5M1.500 10.500h3"/><rect x="6.500" y="7.500" width="5" height="5"/><path d="M6.500 9.500h5M9 7.500v5"/><rect x="11.500" y="11.500" width="3.500" height="3.500" rx=".8"/></svg><span class="lb" style="left:63.5px;letter-spacing:-0.2px">Public Synonyms</span></div>
<div class="row " style="top:563px"><svg class="tw" style="left:19px" viewBox="0 0 16 16" fill="none" stroke="#d9d0d8" stroke-width="1.450" stroke-linecap="round" stroke-linejoin="round"><path d="M6 3.500 10.500 8 6 12.500"/></svg><svg class="ic" style="left:39.5px;top:1.500px;width:18.500px;height:18.500px" viewBox="0 0 16 16" fill="none" stroke="#d9d0d8" stroke-width="1.050" stroke-linejoin="round" stroke-linecap="round"><path d="M1.500 10.500V2h4.500l.8 1.300h5.700V5.500M1.500 4.300h5M1.500 10.500h3"/><ellipse cx="11" cy="9" rx="3.300" ry="1.500"/><path d="M7.700 9v3.500c0 .800 1.500 1.500 3.300 1.500"/><circle cx="13" cy="13" r="1.800"/><circle cx="10" cy="13" r="1.800"/></svg><span class="lb" style="left:63.5px;letter-spacing:-0.21px">Database Links</span></div>
<div class="row " style="top:585px"><svg class="tw" style="left:19px" viewBox="0 0 16 16" fill="none" stroke="#d9d0d8" stroke-width="1.450" stroke-linecap="round" stroke-linejoin="round"><path d="M6 3.500 10.500 8 6 12.500"/></svg><svg class="ic" style="left:39.5px;top:1.500px;width:18.500px;height:18.500px" viewBox="0 0 16 16" fill="none" stroke="#d9d0d8" stroke-width="1.050" stroke-linejoin="round" stroke-linecap="round"><path d="M1.500 10.500V2h4.500l.8 1.300h5.700V5.500M1.500 4.300h5M1.500 10.500h3"/><ellipse cx="10.500" cy="8.500" rx="3.500" ry="1.400"/><path d="M7 8.500v2.500M14 8.500v2"/><circle cx="8" cy="13.500" r="1.600"/><circle cx="11" cy="13.500" r="1.600"/><circle cx="14.300" cy="12" r="1.200"/></svg><span class="lb" style="left:63.5px;letter-spacing:-0.16px">Public Database Links</span></div>
<div class="row " style="top:607px"><svg class="tw" style="left:19px" viewBox="0 0 16 16" fill="none" stroke="#d9d0d8" stroke-width="1.450" stroke-linecap="round" stroke-linejoin="round"><path d="M6 3.500 10.500 8 6 12.500"/></svg><svg class="ic" style="left:39.5px;top:1.500px;width:18.500px;height:18.500px" viewBox="0 0 16 16" fill="none" stroke="#d9d0d8" stroke-width="1.050" stroke-linejoin="round" stroke-linecap="round"><path d="M4.500 4V2.500h4l1 1.500h5v6.500h-2M2.500 5.500h4l1 1.500h5v6.500h-10z"/></svg><span class="lb" style="left:63.5px;letter-spacing:0.12px">Directories</span></div>
<div class="row " style="top:629px"><svg class="tw" style="left:19px" viewBox="0 0 16 16" fill="none" stroke="#d9d0d8" stroke-width="1.450" stroke-linecap="round" stroke-linejoin="round"><path d="M6 3.500 10.500 8 6 12.500"/></svg><svg class="ic" style="left:39.5px;top:1.500px;width:18.500px;height:18.500px" viewBox="0 0 16 16" fill="none" stroke="#d9d0d8" stroke-width="1.050" stroke-linejoin="round" stroke-linecap="round"><path d="M1.500 10.500V2h4.500l.8 1.300h5.700V5.500M1.500 4.300h5M1.500 10.500h3"/><rect x="6.500" y="7.500" width="5.500" height="7"/><path d="M6.500 10h5.500M9 7.500v7"/><path d="M13.500 9v6M12.300 10.500c2.500 0 2.500 3 0 3" stroke-width=".9"/></svg><span class="lb" style="left:63.5px">Editions</span></div>
<div class="row " style="top:651px"><svg class="tw" style="left:19px" viewBox="0 0 16 16" fill="none" stroke="#d9d0d8" stroke-width="1.450" stroke-linecap="round" stroke-linejoin="round"><path d="M6 3.500 10.500 8 6 12.500"/></svg><svg class="ic" style="left:39.5px;top:1.500px;width:18.500px;height:18.500px" viewBox="0 0 16 16" fill="none" stroke="#d9d0d8" stroke-width="1.050" stroke-linejoin="round" stroke-linecap="round"><path d="M1.500 10.500V2h4.500l.8 1.300h5.700V5.500M1.500 4.300h5M1.500 10.500h3"/><path d="M6 11l1.800 3.500M7.800 11 6 14.500M9 14.500V11l1.200 2 1.200-2v3.500M13 11v3.500h2" stroke-width=".9"/><path d="M6 9h9" stroke-width=".8"/></svg><span class="lb" style="left:63.5px;letter-spacing:-0.08px">XML DB Repository</span></div>
<div class="row " style="top:673px"><svg class="tw" style="left:19px" viewBox="0 0 16 16" fill="none" stroke="#d9d0d8" stroke-width="1.450" stroke-linecap="round" stroke-linejoin="round"><path d="M6 3.500 10.500 8 6 12.500"/></svg><svg class="ic" style="left:39.5px;top:1.500px;width:18.500px;height:18.500px" viewBox="0 0 16 16" fill="none" stroke="#d9d0d8" stroke-width="1.050" stroke-linejoin="round" stroke-linecap="round"><path d="M1.500 10.500V2h4.500l.8 1.300h5.700V5.500M1.500 4.300h5M1.500 10.500h3"/><circle cx="11.500" cy="9.500" r="1.700"/><path d="M8.500 15c0-2 1.300-3 3-3s3 1 3 3z"/></svg><span class="lb" style="left:63.5px">Other Users</span></div>
<div class="row" style="top:695px"><svg class="tw" style="left:19px" viewBox="0 0 16 16" fill="none" stroke="#d9d0d8" stroke-width="1.450" stroke-linecap="round" stroke-linejoin="round"><path d="M6 3.500 10.500 8 6 12.500"/></svg><svg class="ic" style="left:39.5px;top:1.500px;width:18.500px;height:18.500px" viewBox="0 0 16 16" fill="none" stroke="#d9d0d8" stroke-width="1.050" stroke-linejoin="round" stroke-linecap="round"><path d="M1.500 10.500V2h4.500l.8 1.300h5.700V5.500M1.500 4.300h5M1.500 10.500h3"/><circle cx="11.500" cy="9.500" r="1.700"/><path d="M8.500 15c0-2 1.300-3 3-3s3 1 3 3z"/></svg></div>
<div class="abs" style="left:24px;top:299px;width:1px;height:44px;background:#3d3154"></div>
<div class="abs" style="left:0;top:701px;width:343px;height:2px;background:#000"></div>
<div class="ph" style="top:702.500px"><svg class="tw" style="left:3px" viewBox="0 0 16 16" fill="none" stroke="#dfe2ff" stroke-width="1.450" stroke-linecap="round" stroke-linejoin="round"><path d="M3.5 6 8 10.500 12.500 6"/></svg><span class="pt" style="letter-spacing:-.480px">SQL SNIPPETS</span></div>
<div class="row" style="top:724.5px"><svg class="tw" style="left:11px" viewBox="0 0 16 16" fill="none" stroke="#d9d0d8" stroke-width="1.450" stroke-linecap="round" stroke-linejoin="round"><path d="M6 3.500 10.500 8 6 12.500"/></svg><span class="lb" style="left:32.500px;letter-spacing:0.11px">Aggregate Functions</span></div>
<div class="row" style="top:746.5px"><svg class="tw" style="left:11px" viewBox="0 0 16 16" fill="none" stroke="#d9d0d8" stroke-width="1.450" stroke-linecap="round" stroke-linejoin="round"><path d="M6 3.500 10.500 8 6 12.500"/></svg><span class="lb" style="left:32.500px;letter-spacing:0.07px">Analytic Functions</span></div>
<div class="row" style="top:768.5px"><svg class="tw" style="left:11px" viewBox="0 0 16 16" fill="none" stroke="#d9d0d8" stroke-width="1.450" stroke-linecap="round" stroke-linejoin="round"><path d="M6 3.500 10.500 8 6 12.500"/></svg><span class="lb" style="left:32.500px;letter-spacing:0px">Character Functions</span></div>
<div class="row" style="top:790.5px"><svg class="tw" style="left:11px" viewBox="0 0 16 16" fill="none" stroke="#d9d0d8" stroke-width="1.450" stroke-linecap="round" stroke-linejoin="round"><path d="M6 3.500 10.500 8 6 12.500"/></svg><span class="lb" style="left:32.500px;letter-spacing:0px">Conversion Functions</span></div>
<div class="row" style="top:812.5px"><svg class="tw" style="left:11px" viewBox="0 0 16 16" fill="none" stroke="#d9d0d8" stroke-width="1.450" stroke-linecap="round" stroke-linejoin="round"><path d="M6 3.500 10.500 8 6 12.500"/></svg><span class="lb" style="left:32.500px;letter-spacing:0px">Date Formats</span></div>
<div class="row" style="top:834.5px"><svg class="tw" style="left:11px" viewBox="0 0 16 16" fill="none" stroke="#d9d0d8" stroke-width="1.450" stroke-linecap="round" stroke-linejoin="round"><path d="M6 3.500 10.500 8 6 12.500"/></svg><span class="lb" style="left:32.500px;letter-spacing:0px">Date/Time Functions</span></div>
<div class="row" style="top:856.5px"><svg class="tw" style="left:11px" viewBox="0 0 16 16" fill="none" stroke="#d9d0d8" stroke-width="1.450" stroke-linecap="round" stroke-linejoin="round"><path d="M6 3.500 10.500 8 6 12.500"/></svg><span class="lb" style="left:32.500px;letter-spacing:0px">Number Formats</span></div>
<div class="row" style="top:878.5px"><svg class="tw" style="left:11px" viewBox="0 0 16 16" fill="none" stroke="#d9d0d8" stroke-width="1.450" stroke-linecap="round" stroke-linejoin="round"><path d="M6 3.500 10.500 8 6 12.500"/></svg><span class="lb" style="left:32.500px;letter-spacing:0px">Numeric Functions</span></div>
<div class="row" style="top:900.5px"><svg class="tw" style="left:11px" viewBox="0 0 16 16" fill="none" stroke="#d9d0d8" stroke-width="1.450" stroke-linecap="round" stroke-linejoin="round"><path d="M6 3.500 10.500 8 6 12.500"/></svg><span class="lb" style="left:32.500px;letter-spacing:0px">Optimizer Hints</span></div>
<div class="ph" style="top:926.270px"><svg class="tw" style="left:3px" viewBox="0 0 16 16" fill="none" stroke="#dfe2ff" stroke-width="1.450" stroke-linecap="round" stroke-linejoin="round"><path d="M6 3.500 10.500 8 6 12.500"/></svg><span class="pt" style="letter-spacing:-.660px">REPORTS</span></div>
</div>

<div id="ed">
<div id="tabs">
<div class="tab" style="left:0;width:127.500px"><svg class="abs" style="left:13.500px;top:10.500px;width:14px;height:14px" viewBox="0 0 14 14" fill="none" stroke="#8fb4ee" stroke-width="1.200"><circle cx="7" cy="7" r="5.600"/><path d="M7 6.300v3.700" stroke-linecap="round"/><circle cx="7" cy="4.200" r=".500" fill="#8fb4ee"/></svg><span class="abs" style="left:34px;top:.700px;color:#ddd5dd">readme.md</span></div>
<div class="tab" style="left:128.500px;width:258px;background:#2c2140;border-top:1.400px solid #7d5cae"><span class="abs" style="left:15.500px;top:-.700px;font-size:10.500px;font-weight:bold;color:#d9bb5c;letter-spacing:-.300px">JS</span><span class="abs u2" style="left:32.500px;top:-.600px;color:#f1e9ef">PURCHASE_ORDER_MODULE.mjs</span><svg class="abs" style="left:236.500px;top:10.500px;width:12px;height:12px" viewBox="0 0 12 12" stroke="#f1e9ef" stroke-width="1.500" stroke-linecap="round"><path d="M2 2l8 8M10 2l-8 8"/></svg></div>
</div>
<svg class="abs" style="left:805.500px;top:8.500px;width:20px;height:19px" viewBox="0 0 20 19" fill="none" stroke="#d9d0d8" stroke-width="1.200" stroke-linejoin="round"><path d="M9 14.500H2.500v-12h5l1.500 2h7.500V8M2.500 6.500h14"/><circle cx="14" cy="13.500" r="2.600"/><path d="M14 9v2M10 10.500l1.800 1.300M18 10.500l-1.800 1.300M10 16.500l1.800-1.300M18 16.500l-1.800-1.300M9.500 13.500h2M16.500 13.500h2" stroke-width="1"/></svg>
<svg class="abs" style="left:829px;top:12px;width:12px;height:12px" viewBox="0 0 12 12" fill="none" stroke="#7b86f8" stroke-width="1.200" stroke-linecap="round" stroke-linejoin="round"><path d="M2.500 4.500 6 8l3.500-3.500"/></svg>
<svg class="abs" style="left:846px;top:10px;width:16.500px;height:16.500px" viewBox="0 0 24 24" fill="none" stroke="#c9c0c8" stroke-width="1.500" stroke-linejoin="round"><circle cx="12" cy="12" r="2.800"/><path d="M10.300 2.500h3.400l.5 2.700 1.700.7 2.300-1.500 2.400 2.400-1.500 2.300.7 1.700 2.700.5v3.400l-2.700.5-.7 1.700 1.500 2.300-2.400 2.400-2.300-1.500-1.700.7-.5 2.700h-3.400l-.5-2.700-1.700-.7-2.300 1.500-2.400-2.400 1.500-2.300-.7-1.700-2.700-.5v-3.400l2.700-.5.7-1.700-1.500-2.300 2.400-2.400 2.300 1.500 1.700-.7z"/></svg>
<svg class="abs" style="left:871px;top:9px;width:18px;height:17px" viewBox="0 0 18 17"><rect x="2.400" y="2.700" width="13.200" height="11.600" rx="1" fill="none" stroke="#efe6ea" stroke-width="1.300"/><rect x="2.400" y="10" width="13.200" height="4.300" fill="#efe6ea"/></svg>
<svg class="abs" style="left:897px;top:9px;width:18px;height:17px" viewBox="0 0 18 17" fill="none" stroke="#efe6ea" stroke-width="1.300"><rect x="2.400" y="2.700" width="13.200" height="11.600" rx="1"/><path d="M9 2.700v11.600"/></svg>
<div class="abs" style="left:927px;top:0;line-height:33px;font-size:13px;font-weight:bold;letter-spacing:.200px;color:#e9e1e6">···</div>
<div id="bc"><span style="left:18px;letter-spacing:.100px">podman-freepdb1-demouser</span><svg class="abs" style="left:188px;top:4px;width:14px;height:14px" viewBox="0 0 14 14" fill="none" stroke="#3b3350" stroke-width="1.200" stroke-linecap="round" stroke-linejoin="round"><path d="M5 2.800 9.500 7 5 11.200"/></svg><span style="left:202.500px">object</span><svg class="abs" style="left:241px;top:4px;width:14px;height:14px" viewBox="0 0 14 14" fill="none" stroke="#3b3350" stroke-width="1.200" stroke-linecap="round" stroke-linejoin="round"><path d="M5 2.800 9.500 7 5 11.200"/></svg><span class="u3" style="left:255.500px">DEMOUSER</span><svg class="abs" style="left:325px;top:4px;width:14px;height:14px" viewBox="0 0 14 14" fill="none" stroke="#3b3350" stroke-width="1.200" stroke-linecap="round" stroke-linejoin="round"><path d="M5 2.800 9.500 7 5 11.200"/></svg><span class="u3" style="left:340px">MLE MODULE</span><svg class="abs" style="left:423px;top:4px;width:14px;height:14px" viewBox="0 0 14 14" fill="none" stroke="#3b3350" stroke-width="1.200" stroke-linecap="round" stroke-linejoin="round"><path d="M5 2.800 9.500 7 5 11.200"/></svg><span style="left:441px;top:-.500px;font-size:9px;font-weight:bold;color:#d3a94c;letter-spacing:-.300px">JS</span><span class="u3" style="left:459px">PURCHASE_ORDER_MODULE</span></div>
<div id="code">
<div class="abs" style="left:71px;top:0;width:655px;height:19px;background:#17171c;border:1px solid #26262e"></div>
<div class="abs" style="left:71.4px;top:57px;width:1px;height:152px;background:#2b2836"></div><div class="abs" style="left:71.4px;top:228px;width:1px;height:684px;background:#2b2836"></div><div class="abs" style="left:105.1px;top:247px;width:1px;height:19px;background:#2b2836"></div><div class="abs" style="left:105.1px;top:399px;width:1px;height:19px;background:#2b2836"></div><div class="abs" style="left:105.1px;top:494px;width:1px;height:418px;background:#2b2836"></div><div class="abs" style="left:138.8px;top:532px;width:1px;height:152px;background:#2b2836"></div><div class="abs" style="left:138.8px;top:722px;width:1px;height:19px;background:#2b2836"></div><div class="abs" style="left:138.8px;top:760px;width:1px;height:152px;background:#2b2836"></div><div class="abs" style="left:172.5px;top:779px;width:1px;height:133px;background:#2b2836"></div>
<div class="ln a" style="top:0px">1</div><div class="cl" style="top:0px"><i class="k">import</i> <i class="b1">{</i> <i class="v">parseKeyValueString</i> <i class="b1">}</i> <i class="k">from</i> <i class="s">"utilities"</i>;</div>
<div class="ln" style="top:19px">2</div><div class="cl" style="top:19px"></div>
<div class="ln" style="top:38px">3</div><div class="cl" style="top:38px"><i class="c">/**</i></div>
<div class="ln" style="top:57px">4</div><div class="cl" style="top:57px"><i class="c"> * Processes an order by parsing key-value string data and inserting it into the database.</i></div>
<div class="ln" style="top:76px">5</div><div class="cl" style="top:76px"><i class="c"> * Throws an error if input is not a non-null string or if parsed data is empty.</i></div>
<div class="ln" style="top:95px">6</div><div class="cl" style="top:95px"><i class="c"> *</i></div>
<div class="ln" style="top:114px">7</div><div class="cl" style="top:114px"><i class="c"> * </i><i class="t">@param</i> <i class="tb">{</i><i class="t">string</i><i class="tb">}</i> <i class="tv">orderData</i><i class="c"> - The input string containing order key-value pairs.</i></div>
<div class="ln" style="top:133px">8</div><div class="cl" style="top:133px"><i class="c"> * </i><i class="t">@returns</i> <i class="tb">{</i><i class="t">boolean</i><i class="tb">}</i><i class="c"> True if the order was inserted successfully, false otherwise.</i></div>
<div class="ln" style="top:152px">9</div><div class="cl" style="top:152px"><i class="c"> * </i><i class="t">@throws</i> <i class="tb">{</i><i class="t">TypeError</i><i class="tb">}</i><i class="c"> If the input is not a non-null string.</i></div>
<div class="ln" style="top:171px">10</div><div class="cl" style="top:171px"><i class="c"> * </i><i class="t">@throws</i> <i class="tb">{</i><i class="t">Error</i><i class="tb">}</i><i class="c"> If the parsed order data is empty.</i></div>
<div class="ln" style="top:190px">11</div><div class="cl" style="top:190px"><i class="c"> */</i></div>
<div class="ln" style="top:209px">12</div><div class="cl" style="top:209px"><i class="k">export</i> <i class="k">function</i> <i class="f">processOrder</i><i class="b1">(</i><i class="tv">orderData</i><i class="b1">)</i> <i class="b1">{</i></div>
<div class="ln" style="top:228px">13</div><div class="cl" style="top:228px">    <i class="k">if</i> <i class="b2">(</i><i class="k">typeof</i> <i class="v">orderData</i> <i class="o">!==</i> <i class="s">"string"</i> <i class="o">||</i> <i class="v">orderData</i> <i class="o">===</i> <i class="l">null</i><i class="b2">)</i> <i class="b2">{</i></div>
<div class="ln" style="top:247px">14</div><div class="cl" style="top:247px">        <i class="k">throw</i> <i class="k">new</i> <i class="f">TypeError</i><i class="b3">(</i><i class="s">"Input must be a non-null string"</i><i class="b3">)</i>;</div>
<div class="ln" style="top:266px">15</div><div class="cl" style="top:266px">    <i class="b2">}</i></div>
<div class="ln" style="top:285px">16</div><div class="cl" style="top:285px"></div>
<div class="ln" style="top:304px">17</div><div class="cl" style="top:304px">    <i class="c">// remember that parseKeyValueString is defined in the utilities package</i></div>
<div class="ln" style="top:323px">18</div><div class="cl" style="top:323px">    <i class="k">const</i> <i class="d">orderDataJSON</i> <i class="o">=</i> <i class="f">parseKeyValueString</i><i class="b2">(</i><i class="v">orderData</i><i class="b2">)</i>;</div>
<div class="ln" style="top:342px">19</div><div class="cl" style="top:342px"></div>
<div class="ln" style="top:361px">20</div><div class="cl" style="top:361px">    <i class="c">// Check if orderDataJSON is an empty object</i></div>
<div class="ln" style="top:380px">21</div><div class="cl" style="top:380px">    <i class="k">if</i> <i class="b2">(</i><i class="o">!</i><i class="v">orderDataJSON</i> <i class="o">||</i> <i class="f">Object</i><i class="p">.</i><i class="f">keys</i><i class="b3">(</i><i class="v">orderDataJSON</i><i class="b3">)</i><i class="p">.</i><i class="v">length</i> <i class="o">===</i> <i class="n">0</i><i class="b2">)</i> <i class="b2">{</i></div>
<div class="ln" style="top:399px">22</div><div class="cl" style="top:399px">        <i class="k">throw</i> <i class="k">new</i> <i class="f">Error</i><i class="b3">(</i><i class="s">"Parsed order data is empty"</i><i class="b3">)</i>;</div>
<div class="ln" style="top:418px">23</div><div class="cl" style="top:418px">    <i class="b2">}</i></div>
<div class="ln" style="top:437px">24</div><div class="cl" style="top:437px"></div>
<div class="ln" style="top:456px">25</div><div class="cl" style="top:456px">    <i class="c">// insert data using the MLE/JavaScript SQL driver</i></div>
<div class="ln" style="top:475px">26</div><div class="cl" style="top:475px">    <i class="k">const</i> <i class="d">result</i> <i class="o">=</i> <i class="v">session</i><i class="p">.</i><i class="f">execute</i><i class="b2">(</i></div>
<div class="ln" style="top:494px">27</div><div class="cl" style="top:494px">        <i class="s">`</i></div>
<div class="ln" style="top:513px">28</div><div class="cl" style="top:513px">        <i class="s">insert into orders (</i></div>
<div class="ln" style="top:532px">29</div><div class="cl" style="top:532px">            <i class="s">order_id,</i></div>
<div class="ln" style="top:551px">30</div><div class="cl" style="top:551px">            <i class="s">order_date,</i></div>
<div class="ln" style="top:570px">31</div><div class="cl" style="top:570px">            <i class="s">order_mode,</i></div>
<div class="ln" style="top:589px">32</div><div class="cl" style="top:589px">            <i class="s">customer_id,</i></div>
<div class="ln" style="top:608px">33</div><div class="cl" style="top:608px">            <i class="s">order_status,</i></div>
<div class="ln" style="top:627px">34</div><div class="cl" style="top:627px">            <i class="s">order_total,</i></div>
<div class="ln" style="top:646px">35</div><div class="cl" style="top:646px">            <i class="s">sales_rep_id,</i></div>
<div class="ln" style="top:665px">36</div><div class="cl" style="top:665px">            <i class="s">promotion_id</i></div>
<div class="ln" style="top:684px">37</div><div class="cl" style="top:684px">        <i class="s">)</i></div>
<div class="ln" style="top:703px">38</div><div class="cl" style="top:703px">        <i class="s">select</i></div>
<div class="ln" style="top:722px">39</div><div class="cl" style="top:722px">            <i class="s">jt.*</i></div>
<div class="ln" style="top:741px">40</div><div class="cl" style="top:741px">        <i class="s">from</i></div>
<div class="ln" style="top:760px">41</div><div class="cl" style="top:760px">            <i class="s">json_table(:orderDataJSON, '$' columns</i></div>
<div class="ln" style="top:779px">42</div><div class="cl" style="top:779px">                <i class="s">order_id             path '$.order_id',</i></div>
<div class="ln" style="top:798px">43</div><div class="cl" style="top:798px">                <i class="s">order_date timestamp path '$.order_date',</i></div>
<div class="ln" style="top:817px">44</div><div class="cl" style="top:817px">                <i class="s">order_mode           path '$.order_mode',</i></div>
<div class="ln" style="top:836px">45</div><div class="cl" style="top:836px">                <i class="s">customer_id          path '$.customer_id',</i></div>
<div class="ln" style="top:855px">46</div><div class="cl" style="top:855px">                <i class="s">order_status         path '$.order_status',</i></div>
<div class="ln" style="top:874px">47</div><div class="cl" style="top:874px">                <i class="s">order_total          path '$.order_total',</i></div>
<div class="ln" style="top:893px">48</div><div class="cl" style="top:893px">                <i class="s">sales_rep_id         path '$.sales_rep_id',</i></div>
</div>
<svg class="abs" style="left:848.700px;top:57px;width:92px;height:140px;opacity:.55" viewBox="0 0 93 140" fill="none" stroke-width="1.300"><path stroke="#f3d6c8" d="M0 1h6M31 1h4M3 13h6M11 13h6M3 15h8M13 15h7M3 17h7M12 17h9M3 19h7M12 19h5M0 23h6M7 23h8M4 25h2M8 25h6M8 27h5M14 27h3M4 35h5M4 41h2M8 43h5M14 43h3M4 51h5M4 121h2M8 123h6M6 125h4M8 127h6"/><path stroke="#ffd700" d="M7 1h1M29 1h1M28 23h1M38 23h1M40 23h1M27 105h1M12 113h1M0 131h1"/><path stroke="#c6a6f6" d="M9 1h19M19 13h9M29 23h9M15 25h9M41 25h9M46 35h9M9 41h13M38 41h13M53 41h6M19 51h7M12 105h13M16 107h3M21 107h8M30 107h7M16 109h4M22 109h8M31 109h12M16 111h3M21 111h13M8 121h6M15 121h12"/><path stroke="#ef8636" d="M36 1h11M29 25h8M28 27h6M35 27h4M40 27h2M43 27h1M45 27h8M54 27h7M24 43h7M32 43h5M38 43h4M43 43h2M46 43h6M8 53h1M8 55h6M15 55h4M20 55h6M27 55h1M12 57h9M12 59h11M12 61h11M12 63h12M12 65h13M12 67h12M12 69h13M12 71h12M8 73h1M8 75h6M12 77h4M8 79h4M12 81h26M39 81h3M43 81h7M16 83h8M37 83h4M42 83h13M16 85h10M27 85h9M37 85h4M42 85h15M16 87h10M37 87h4M42 87h15M16 89h11M37 89h4M42 89h16M16 91h12M37 91h4M42 91h17M16 93h11M37 93h4M42 93h16M16 95h12M37 95h4M42 95h17M16 97h12M37 97h4M42 97h16M12 99h1M14 99h2M8 101h1"/><path stroke="#ece2ea" d="M47 1h1M62 27h1M56 35h1M32 41h1M52 41h1M53 43h1M26 51h1M9 101h1M25 105h1M19 107h1M29 107h1M37 107h1M20 109h1M30 109h1M43 109h1M19 111h1M5 117h1M14 121h1M19 123h1M20 127h1"/><path stroke="#606385" d="M0 5h3M1 7h1M3 7h9M13 7h2M16 7h5M22 7h2M25 7h7M33 7h9M43 7h6M50 7h4M55 7h3M59 7h9M69 7h2M72 7h4M77 7h3M81 7h9M1 9h1M3 9h6M10 9h2M13 9h5M19 9h2M22 9h5M28 9h2M31 9h3M35 9h1M37 9h8M46 9h6M53 9h2M56 9h2M59 9h6M66 9h4M71 9h2M74 9h6M1 11h1M1 13h1M29 13h1M31 13h3M35 13h5M41 13h6M48 13h10M59 13h5M65 13h9M75 13h6M1 15h1M22 15h4M27 15h2M30 15h3M34 15h5M40 15h3M44 15h8M53 15h13M67 15h5M73 15h10M1 17h1M23 17h2M26 17h3M30 17h5M36 17h2M39 17h3M43 17h1M45 17h8M54 17h7M1 19h1M19 19h2M22 19h3M26 19h6M33 19h5M39 19h4M44 19h2M47 19h6M1 21h2M4 33h2M7 33h8M16 33h4M21 33h19M41 33h2M44 33h7M52 33h2M55 33h3M59 33h9M69 33h7M4 39h2M7 39h5M13 39h2M16 39h13M30 39h2M33 39h2M36 39h5M42 39h6M4 49h2M7 49h6M14 49h4M19 49h5M25 49h3M29 49h14M44 49h3M48 49h6"/><path stroke="#ffd75a" d="M10 13h1M17 13h1M12 15h1M20 15h1M11 17h1M21 17h1M11 19h1M17 19h1"/><path stroke="#7f8af7" d="M16 23h12M18 27h9M26 35h19M26 41h6M33 41h4M18 43h5M27 51h7"/><path stroke="#da70d6" d="M7 25h1M59 25h1M61 25h1M4 29h1M45 35h1M55 35h1M7 41h1M65 41h1M67 41h1M4 45h1M34 51h1M4 117h1M7 121h1M33 121h1M35 121h1M4 125h1M11 125h1M4 129h1"/><path stroke="#7ea9ec" d="M25 25h3M38 25h2M51 25h3M24 35h1M8 41h1M23 41h2M60 41h3M17 51h1M28 121h3"/><path stroke="#f3dc9c" d="M55 25h4M15 123h4M15 127h5"/><path stroke="#179fff" d="M27 27h1M61 27h1M37 41h1M51 41h1M23 43h1M52 43h1M8 103h1M8 115h1"/><path stroke="#ebe0ee" d="M10 35h13M10 51h6"/><path stroke="#efc25c" d="M64 41h1M32 121h1"/></svg>
<div class="abs" style="left:941.200px;top:57px;width:19px;height:892px;background:#131319;border-left:1px solid #20202a"></div><div class="abs" style="left:942.200px;top:57px;width:18px;height:2.300px;background:#9c8658"></div>
</div>

<div id="status">
<div class="abs" style="left:0;top:0;width:33.700px;height:22px;background:#d9534c"></div>
<svg class="abs" style="left:11px;top:5px;width:12px;height:12px" viewBox="0 0 12 12" fill="none" stroke="#fff" stroke-width="1.300" stroke-linecap="round" stroke-linejoin="round"><path d="M1.500 5.500 5 8.500 1.500 11M10.500 1 7 3.500l3.500 3"/></svg>
<svg class="abs" style="left:41px;top:3.500px;width:13px;height:15px" viewBox="0 0 13 15" fill="none" stroke="#30244a" stroke-width="1.200"><circle cx="3.500" cy="3" r="1.700"/><circle cx="3.500" cy="12" r="1.700"/><circle cx="9.500" cy="4.500" r="1.700"/><path d="M3.500 4.700v5.600M9.500 6.200c0 2.800-5 2.300-6 4.300"/></svg>
<span style="left:59px;letter-spacing:.140px">post-execution-debugging*</span>
<svg class="abs" style="left:212px;top:4px;width:15px;height:14px" viewBox="0 0 15 14" fill="none" stroke="#30244a" stroke-width="1.200" stroke-linecap="round" stroke-linejoin="round"><path d="M5 11H4a3 3 0 0 1-.500-6 4 4 0 0 1 7.800-.500A3.300 3.300 0 0 1 11 11h-1M7.500 12.500V7M5.500 9l2-2 2 2"/></svg>
<svg class="abs" style="left:242px;top:3.500px;width:14px;height:15px" viewBox="0 0 14 15" fill="none" stroke="#30244a" stroke-width="1.200" stroke-linecap="round"><circle cx="3.500" cy="3" r="1.700"/><circle cx="3.500" cy="12" r="1.700"/><path d="M3.500 4.700v5.600M7 5c3 0 3 5 0 5.500M9 2.500l2.500 2-2.500 2M11 8l2 2-2 2"/></svg>
<svg class="abs" style="left:271px;top:3.500px;width:15px;height:15px" viewBox="0 0 15 15" fill="none" stroke="#30244a" stroke-width="1.200" stroke-linejoin="round" stroke-linecap="round"><path d="M13.500 1.500c-4 0-7 2.500-8.500 6.500l2 2c4-1.500 6.500-4.500 6.500-8.500zM5 8 2 7.500 4.500 5H7M7 10l.500 3L10 10.500V8M3 11l-1.500 2.500L4 12"/></svg>
<svg class="abs" style="left:287px;top:4px;width:13px;height:14px" viewBox="0 0 13 14" fill="none" stroke="#30244a" stroke-width="1.200" stroke-linecap="round"><path d="M5 9.500 3 11.500a1.800 1.800 0 0 1-2.500-2.500l2-2M8 4.500l2-2A1.800 1.800 0 0 1 12.500 5l-2 2M4.500 5l4 4M1 13l1.500-1.500"/></svg>
<span style="left:303.500px;letter-spacing:-.150px">Launchpad</span>
<svg class="abs" style="left:377px;top:4px;width:14px;height:14px" viewBox="0 0 14 14" fill="none" stroke="#30244a" stroke-width="1.200" stroke-linecap="round"><circle cx="7" cy="7" r="5.800"/><path d="M4.800 4.800l4.400 4.400M9.200 4.800 4.800 9.200"/></svg>
<span style="left:394px">0</span>
<svg class="abs" style="left:403.500px;top:4px;width:14px;height:14px" viewBox="0 0 14 14" fill="none" stroke="#30244a" stroke-width="1.200" stroke-linejoin="round" stroke-linecap="round"><path d="M7 1.500 13 12.500H1zM7 5.500v3.500M7 10.700v.2"/></svg>
<span style="left:420.500px">0</span>
<span style="left:750px;letter-spacing:-.350px">Ln 1, Col 1</span>
<span style="left:821.500px;letter-spacing:-.550px">Spaces: 4</span>
<span style="left:886.500px;letter-spacing:-.650px">UTF-8</span>
<svg class="abs" style="left:933px;top:4px;width:8px;height:14px" viewBox="0 0 8 14" fill="none" stroke="#30244a" stroke-width="1.200" stroke-linecap="round" stroke-linejoin="round"><path d="M5 1.500H4.500C3.500 1.500 3 2 3 3v2.500C3 6.500 2.500 7 1.500 7 2.500 7 3 7.500 3 8.500V11c0 1 .500 1.500 1.500 1.500H5"/></svg>
<svg class="abs" style="left:939px;top:9px;width:7px;height:9px" viewBox="0 0 7 9" fill="none" stroke="#30244a" stroke-width="1.200"><circle cx="3.500" cy="5.500" r="2"/><path d="M3.500 0v2"/></svg>
<span style="left:954.500px;letter-spacing:-.250px">JavaScript</span>
<svg class="abs" style="left:1025.500px;top:4px;width:15px;height:14px" viewBox="0 0 15 14" fill="#30244a"><path d="M3.500 1.500C2 1.500 1.300 3 1.600 5 .600 6 .300 7 .300 8.500.300 11 3.500 13 7.500 13s7.200-2 7.200-4.500c0-1.500-.300-2.500-1.300-3.500.300-2-.400-3.500-1.900-3.500-1.500 0-3 .500-4 1.500C6.500 2 5 1.500 3.500 1.500zM3 6.500h9v3.500c-1 1-2.500 1.500-4.500 1.500S4 11 3 10z" fill-rule="evenodd"/><rect x="5.200" y="7.500" width="1.300" height="2.300" rx=".600"/><rect x="8.500" y="7.500" width="1.300" height="2.300" rx=".600"/></svg>
<svg class="abs" style="left:1057px;top:4.500px;width:11px;height:13px" viewBox="0 0 11 13" fill="none" stroke="#30244a" stroke-width="1.300" stroke-linecap="round"><path d="M2 8.500A4.500 4.500 0 1 1 9 8.500M3.700 7A2.300 2.300 0 1 1 7.300 7"/><circle cx="5.500" cy="5.500" r=".800" fill="#30244a"/><path d="M5.500 6.500v5.500" stroke-width="1.600"/></svg>
<span style="left:1072.500px;letter-spacing:-.450px">Go Live</span>
<svg class="abs" style="left:1126.500px;top:4.500px;width:9px;height:13px" viewBox="0 0 9 13" fill="none" stroke="#30244a" stroke-width="1.200" stroke-linecap="round" stroke-linejoin="round"><path d="M1 3.500h7v2.500a3.500 3.500 0 0 1-7 0zM3 1v2.500M6 1v2.500M4.500 9.500V12.500"/></svg>
<span style="left:1147px;letter-spacing:.100px">podman-freepdb1-demouser</span>
<svg class="abs" style="left:1318px;top:3.500px;width:15px;height:15px" viewBox="0 0 15 15" fill="none" stroke="#30244a" stroke-width="1.200" stroke-linejoin="round" stroke-linecap="round"><path d="M8 2H7a3.500 3.500 0 0 0-3.500 3.500V9l-1.500 2h10l-1.500-2V8M5.500 11.500c0 2 3 2 3 0"/><circle cx="11" cy="4" r="2.200" fill="#30244a"/></svg>
</div>

<!-- dropdown menu -->
<div class="abs" style="left:1017px;top:63.500px;width:214.500px;height:59.500px;background:#15151b;border-radius:7px;box-shadow:0 2px 6px rgba(0,0,0,.600)">
<span class="abs" style="left:30.500px;top:4px;line-height:24px;font-size:13px;letter-spacing:-.120px;color:#e9e1e6;white-space:nowrap">Choose Debug Runner File</span>
<span class="abs" style="left:30.500px;top:31px;line-height:24px;font-size:13px;color:#e9e1e6;white-space:nowrap">New Debug Runner</span>
</div>
<!-- notification -->
<div class="abs" style="left:887.800px;top:932px;width:452px;height:43.500px;background:#f5bba9;border:1.400px solid #ef8031;border-radius:4px">
<svg class="abs" style="left:10px;top:12.500px;width:17px;height:17px" viewBox="0 0 17 17" fill="none" stroke="#e5483a" stroke-width="1.300" stroke-linecap="round"><circle cx="8.500" cy="8.500" r="7"/><path d="M5.800 5.800l5.400 5.400M11.200 5.800l-5.400 5.400"/></svg>
<span class="abs" style="left:31.200px;top:1.500px;line-height:40px;font-size:13px;color:#3a2f38;letter-spacing:-.050px;white-space:nowrap">Please select a file to launch MLE Post-Execution debugging</span>
</div>
<!-- mouse cursor -->
<svg class="abs" style="left:1220px;top:46px;width:28px;height:32px" viewBox="0 0 28 32"><path d="M5.800 6.200V23.500c0 .800.400 1.200 1 1.700l1.600 1.300c.600.500 1.200.500 1.900.100l10.500-6.300c1-.600 1-1.700.200-2.400L7.200 5.500c-.700-.600-1.400-.200-1.400.700z" fill="#000" stroke="#efecee" stroke-width="2.100" stroke-linejoin="round"/></svg>

</div>
</body></html>
